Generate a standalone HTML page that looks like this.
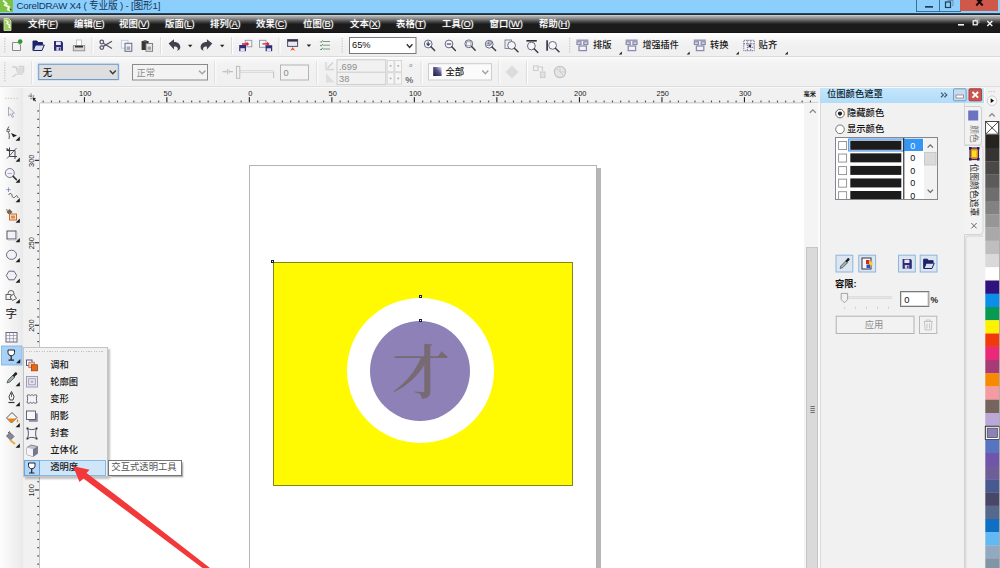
<!DOCTYPE html><html lang="zh-CN"><head><meta charset="utf-8"><title>CorelDRAW X4</title><style>
html,body{margin:0;padding:0;}
body{width:1000px;height:568px;overflow:hidden;position:relative;background:#fff;
 font-family:"Liberation Sans","Noto Sans CJK SC",sans-serif;font-size:10px;color:#000;}
.a{position:absolute;}
.t{position:absolute;white-space:nowrap;line-height:1;}
</style></head><body>
<div class="a" style="left:0px;top:0px;width:1000px;height:13px;background:linear-gradient(#8ccffd,#8ccffd 60%,#89d0fb);"></div>
<div class="a" style="left:0px;top:12.7px;width:1000px;height:2.2px;background:linear-gradient(#4a7090,#1c2c40 40%,#1c2c40);"></div>
<div class="t" style="left:16.5px;top:1.2px;font-size:9.7px;color:#10355a;letter-spacing:-0.2px;">CorelDRAW X4 ( 专业版 ) - [图形1]</div>
<div class="a" style="left:0px;top:0px;width:12.5px;height:11.5px;background:#7cc242;"></div>
<div class="a" style="left:916px;top:0px;width:23.5px;height:11.5px;border:1px solid #3d6f96;border-top:none;box-sizing:border-box;"></div>
<div class="a" style="left:939.5px;top:0px;width:21px;height:11.5px;border-bottom:1px solid #3d6f96;box-sizing:border-box;"></div>
<div class="a" style="left:960px;top:0px;width:37.5px;height:11.3px;background:#d0584a;"></div>
<svg class="a" style="left:900px;top:0" width="100" height="33" viewBox="900 0 100 33"><rect x="925" y="6" width="8" height="1.700" fill="#1c3c5a"/><path d="M948 1.500v-1h5v5h-1" fill="none" stroke="#6a8aa8" stroke-width="0.900"/><rect x="945.500" y="2" width="5" height="5.500" fill="none" stroke="#1c3c5a" stroke-width="1.200"/><path d="M976.300 -1.500l6.400 7M982.700 -1.500l-6.400 7" stroke="#160a08" stroke-width="2"/></svg>
<div class="a" style="left:0px;top:14.8px;width:1000px;height:18.4px;background:linear-gradient(#e0e0e0 0,#b8b8b8 1px,#8a8a8a 3.500px,#4a4a4a 6.500px,#1b1b1b 9.200px,#1b1b1b 17px,#0a0a0a 18.400px);"></div>
<div class="t" style="left:28px;top:18.8px;font-size:9.4px;color:#fff;font-weight:500;text-shadow:0 0 1.5px rgba(255,255,255,0.5);">文件<span style="letter-spacing:-0.3px">(<u>F</u>)</span></div>
<div class="t" style="left:74px;top:18.8px;font-size:9.4px;color:#fff;font-weight:500;text-shadow:0 0 1.5px rgba(255,255,255,0.5);">编辑<span style="letter-spacing:-0.3px">(<u>E</u>)</span></div>
<div class="t" style="left:119px;top:18.8px;font-size:9.4px;color:#fff;font-weight:500;text-shadow:0 0 1.5px rgba(255,255,255,0.5);">视图<span style="letter-spacing:-0.3px">(<u>V</u>)</span></div>
<div class="t" style="left:165px;top:18.8px;font-size:9.4px;color:#fff;font-weight:500;text-shadow:0 0 1.5px rgba(255,255,255,0.5);">版面<span style="letter-spacing:-0.3px">(<u>L</u>)</span></div>
<div class="t" style="left:210px;top:18.8px;font-size:9.4px;color:#fff;font-weight:500;text-shadow:0 0 1.5px rgba(255,255,255,0.5);">排列<span style="letter-spacing:-0.3px">(<u>A</u>)</span></div>
<div class="t" style="left:256px;top:18.8px;font-size:9.4px;color:#fff;font-weight:500;text-shadow:0 0 1.5px rgba(255,255,255,0.5);">效果<span style="letter-spacing:-0.3px">(<u>C</u>)</span></div>
<div class="t" style="left:303px;top:18.8px;font-size:9.4px;color:#fff;font-weight:500;text-shadow:0 0 1.5px rgba(255,255,255,0.5);">位图<span style="letter-spacing:-0.3px">(<u>B</u>)</span></div>
<div class="t" style="left:350px;top:18.8px;font-size:9.4px;color:#fff;font-weight:500;text-shadow:0 0 1.5px rgba(255,255,255,0.5);">文本<span style="letter-spacing:-0.3px">(<u>X</u>)</span></div>
<div class="t" style="left:396px;top:18.8px;font-size:9.4px;color:#fff;font-weight:500;text-shadow:0 0 1.5px rgba(255,255,255,0.5);">表格<span style="letter-spacing:-0.3px">(<u>T</u>)</span></div>
<div class="t" style="left:442px;top:18.8px;font-size:9.4px;color:#fff;font-weight:500;text-shadow:0 0 1.5px rgba(255,255,255,0.5);">工具<span style="letter-spacing:-0.3px">(<u>O</u>)</span></div>
<div class="t" style="left:489.5px;top:18.8px;font-size:9.4px;color:#fff;font-weight:500;text-shadow:0 0 1.5px rgba(255,255,255,0.5);">窗口<span style="letter-spacing:-0.3px">(<u>W</u>)</span></div>
<div class="t" style="left:539px;top:18.8px;font-size:9.4px;color:#fff;font-weight:500;text-shadow:0 0 1.5px rgba(255,255,255,0.5);">帮助<span style="letter-spacing:-0.3px">(<u>H</u>)</span></div>
<svg class="a" style="left:0;top:0" width="14" height="33" viewBox="0 0 14 33"><path d="M3 0.500l3.500 3-1.500 1.500 4 2-1 2.500 2.500 1" fill="none" stroke="#f4fae8" stroke-width="2"/><circle cx="10.600" cy="9.600" r="0.900" fill="#2a4a1a"/><path d="M4 18.500h4.500l2.500 2.500v9.500h-7z" fill="#9ccc5c" stroke="#d8ecb8" stroke-width="0.800"/><path d="M5.500 20l2.500 2-1 1.500 2.500 1.500-.5 2 1.500 1" fill="none" stroke="#f4fae8" stroke-width="1.400"/></svg>
<svg class="a" style="left:950px;top:15px" width="50" height="18" viewBox="950 15 50 18"><rect x="958" y="24" width="6" height="1.600" fill="#f0f0f0"/><path d="M975.500 20.500v-1.500h3.500v4h-1" fill="none" stroke="#bbb" stroke-width="0.800"/><rect x="973.200" y="20.800" width="4" height="4" fill="none" stroke="#f0f0f0" stroke-width="1.300"/><path d="M987.300 21l5 5M992.300 21l-5 5" stroke="#f0f0f0" stroke-width="1.500"/></svg>
<div class="a" style="left:0px;top:33px;width:1000px;height:24px;background:linear-gradient(#fff 0,#fbfbfb 12%,#f3f3f3 35%,#f0f0f0 60%,#f0f0f0);"></div>
<div class="a" style="left:0px;top:56px;width:1000px;height:1px;background:#dadada;"></div>
<div class="a" style="left:0px;top:57px;width:1000px;height:1px;background:#fdfdfd;"></div>
<div class="a" style="left:0px;top:58px;width:1000px;height:29px;background:linear-gradient(#f8f8f8 0,#f2f2f2 25%,#f0f0f0 100%);"></div>
<div class="a" style="left:0px;top:86px;width:1000px;height:1px;background:#dedede;"></div>
<div class="a" style="left:0px;top:87px;width:1000px;height:1px;background:#f8f8f8;"></div>
<div class="a" style="left:0px;top:88px;width:23.5px;height:480px;background:linear-gradient(90deg,#fdfdfd 0,#f6f6f6 35%,#ededed 80%,#e9e9e9 96%,#f8f8f8 100%);"></div>
<div class="a" style="left:23.5px;top:88px;width:796.5px;height:15.5px;background:#f1f1f1;"></div>
<div class="a" style="left:23.5px;top:103px;width:16.5px;height:465px;background:#f1f1f1;"></div>
<div class="a" style="left:40px;top:103px;width:766px;height:465px;background:#fff;"></div>
<div class="a" style="left:249px;top:164.5px;width:347.5px;height:410px;border:1px solid #b4b4b4;box-sizing:border-box;background:#fff;"></div>
<div class="a" style="left:596.5px;top:168px;width:4.5px;height:400px;background:#b6b6b6;"></div>
<div class="a" style="left:273px;top:261.7px;width:300px;height:224.2px;background:#fffa02;border:1px solid #84841c;box-sizing:border-box;"></div>
<div class="a" style="left:346.5px;top:298px;width:147px;height:145px;background:#fff;border-radius:50%;"></div>
<div class="a" style="left:370px;top:321px;width:100px;height:100px;background:#8d81b8;border-radius:50%;"></div>
<div class="t" style="left:392px;top:345px;font-size:58px;color:#786a72;font-weight:600;font-family:'Liberation Serif','Noto Serif CJK SC',serif;">才</div>
<svg class="a" style="left:0;top:88px" width="820" height="16" viewBox="0 88 820 16"><rect x="42.6" y="100.6" width="1.1" height="1.9" fill="#444"/><rect x="50.9" y="100.6" width="1.1" height="1.9" fill="#444"/><rect x="59.1" y="100.6" width="1.1" height="1.9" fill="#444"/><rect x="67.4" y="100.6" width="1.1" height="1.9" fill="#444"/><rect x="75.6" y="100.6" width="1.1" height="1.9" fill="#444"/><rect x="83.9" y="97.2" width="1.1" height="5.3" fill="#222"/><text x="85.2" y="95.7" font-size="7.4" text-anchor="middle" fill="#222" font-family="Liberation Sans, sans-serif">100</text><rect x="92.1" y="100.6" width="1.1" height="1.9" fill="#444"/><rect x="100.4" y="100.6" width="1.1" height="1.9" fill="#444"/><rect x="108.6" y="100.6" width="1.1" height="1.9" fill="#444"/><rect x="116.9" y="100.6" width="1.1" height="1.9" fill="#444"/><rect x="125.1" y="100.6" width="1.1" height="1.9" fill="#444"/><rect x="133.3" y="100.6" width="1.1" height="1.9" fill="#444"/><rect x="141.6" y="100.6" width="1.1" height="1.9" fill="#444"/><rect x="149.8" y="100.6" width="1.1" height="1.9" fill="#444"/><rect x="158.1" y="100.6" width="1.1" height="1.9" fill="#444"/><rect x="166.3" y="97.2" width="1.1" height="5.3" fill="#222"/><text x="167.7" y="95.7" font-size="7.4" text-anchor="middle" fill="#222" font-family="Liberation Sans, sans-serif">50</text><rect x="174.6" y="100.6" width="1.1" height="1.9" fill="#444"/><rect x="182.8" y="100.6" width="1.1" height="1.9" fill="#444"/><rect x="191.1" y="100.6" width="1.1" height="1.9" fill="#444"/><rect x="199.3" y="100.6" width="1.1" height="1.9" fill="#444"/><rect x="207.6" y="100.6" width="1.1" height="1.9" fill="#444"/><rect x="215.8" y="100.6" width="1.1" height="1.9" fill="#444"/><rect x="224.1" y="100.6" width="1.1" height="1.9" fill="#444"/><rect x="232.3" y="100.6" width="1.1" height="1.9" fill="#444"/><rect x="240.6" y="100.6" width="1.1" height="1.9" fill="#444"/><rect x="248.8" y="97.2" width="1.1" height="5.3" fill="#222"/><text x="250.2" y="95.7" font-size="7.4" text-anchor="middle" fill="#222" font-family="Liberation Sans, sans-serif">0</text><rect x="257.1" y="100.6" width="1.1" height="1.9" fill="#444"/><rect x="265.3" y="100.6" width="1.1" height="1.9" fill="#444"/><rect x="273.6" y="100.6" width="1.1" height="1.9" fill="#444"/><rect x="281.8" y="100.6" width="1.1" height="1.9" fill="#444"/><rect x="290.1" y="100.6" width="1.1" height="1.9" fill="#444"/><rect x="298.3" y="100.6" width="1.1" height="1.9" fill="#444"/><rect x="306.6" y="100.6" width="1.1" height="1.9" fill="#444"/><rect x="314.8" y="100.6" width="1.1" height="1.9" fill="#444"/><rect x="323.1" y="100.6" width="1.1" height="1.9" fill="#444"/><rect x="331.3" y="97.2" width="1.1" height="5.3" fill="#222"/><text x="332.7" y="95.7" font-size="7.4" text-anchor="middle" fill="#222" font-family="Liberation Sans, sans-serif">50</text><rect x="339.6" y="100.6" width="1.1" height="1.9" fill="#444"/><rect x="347.8" y="100.6" width="1.1" height="1.9" fill="#444"/><rect x="356.1" y="100.6" width="1.1" height="1.9" fill="#444"/><rect x="364.3" y="100.6" width="1.1" height="1.9" fill="#444"/><rect x="372.6" y="100.6" width="1.1" height="1.9" fill="#444"/><rect x="380.8" y="100.6" width="1.1" height="1.9" fill="#444"/><rect x="389.1" y="100.6" width="1.1" height="1.9" fill="#444"/><rect x="397.3" y="100.6" width="1.1" height="1.9" fill="#444"/><rect x="405.6" y="100.6" width="1.1" height="1.9" fill="#444"/><rect x="413.8" y="97.2" width="1.1" height="5.3" fill="#222"/><text x="415.2" y="95.7" font-size="7.4" text-anchor="middle" fill="#222" font-family="Liberation Sans, sans-serif">100</text><rect x="422.1" y="100.6" width="1.1" height="1.9" fill="#444"/><rect x="430.3" y="100.6" width="1.1" height="1.9" fill="#444"/><rect x="438.6" y="100.6" width="1.1" height="1.9" fill="#444"/><rect x="446.8" y="100.6" width="1.1" height="1.9" fill="#444"/><rect x="455.1" y="100.6" width="1.1" height="1.9" fill="#444"/><rect x="463.3" y="100.6" width="1.1" height="1.9" fill="#444"/><rect x="471.6" y="100.6" width="1.1" height="1.9" fill="#444"/><rect x="479.8" y="100.6" width="1.1" height="1.9" fill="#444"/><rect x="488.1" y="100.6" width="1.1" height="1.9" fill="#444"/><rect x="496.3" y="97.2" width="1.1" height="5.3" fill="#222"/><text x="497.7" y="95.7" font-size="7.4" text-anchor="middle" fill="#222" font-family="Liberation Sans, sans-serif">150</text><rect x="504.6" y="100.6" width="1.1" height="1.9" fill="#444"/><rect x="512.9" y="100.6" width="1.1" height="1.9" fill="#444"/><rect x="521.1" y="100.6" width="1.1" height="1.9" fill="#444"/><rect x="529.4" y="100.6" width="1.1" height="1.9" fill="#444"/><rect x="537.6" y="100.6" width="1.1" height="1.9" fill="#444"/><rect x="545.9" y="100.6" width="1.1" height="1.9" fill="#444"/><rect x="554.1" y="100.6" width="1.1" height="1.9" fill="#444"/><rect x="562.4" y="100.6" width="1.1" height="1.9" fill="#444"/><rect x="570.6" y="100.6" width="1.1" height="1.9" fill="#444"/><rect x="578.9" y="97.2" width="1.1" height="5.3" fill="#222"/><text x="580.2" y="95.7" font-size="7.4" text-anchor="middle" fill="#222" font-family="Liberation Sans, sans-serif">200</text><rect x="587.1" y="100.6" width="1.1" height="1.9" fill="#444"/><rect x="595.4" y="100.6" width="1.1" height="1.9" fill="#444"/><rect x="603.6" y="100.6" width="1.1" height="1.9" fill="#444"/><rect x="611.9" y="100.6" width="1.1" height="1.9" fill="#444"/><rect x="620.1" y="100.6" width="1.1" height="1.9" fill="#444"/><rect x="628.4" y="100.6" width="1.1" height="1.9" fill="#444"/><rect x="636.6" y="100.6" width="1.1" height="1.9" fill="#444"/><rect x="644.9" y="100.6" width="1.1" height="1.9" fill="#444"/><rect x="653.1" y="100.6" width="1.1" height="1.9" fill="#444"/><rect x="661.4" y="97.2" width="1.1" height="5.3" fill="#222"/><text x="662.7" y="95.7" font-size="7.4" text-anchor="middle" fill="#222" font-family="Liberation Sans, sans-serif">250</text><rect x="669.6" y="100.6" width="1.1" height="1.9" fill="#444"/><rect x="677.9" y="100.6" width="1.1" height="1.9" fill="#444"/><rect x="686.1" y="100.6" width="1.1" height="1.9" fill="#444"/><rect x="694.4" y="100.6" width="1.1" height="1.9" fill="#444"/><rect x="702.6" y="100.6" width="1.1" height="1.9" fill="#444"/><rect x="710.9" y="100.6" width="1.1" height="1.9" fill="#444"/><rect x="719.1" y="100.6" width="1.1" height="1.9" fill="#444"/><rect x="727.4" y="100.6" width="1.1" height="1.9" fill="#444"/><rect x="735.6" y="100.6" width="1.1" height="1.9" fill="#444"/><rect x="743.9" y="97.2" width="1.1" height="5.3" fill="#222"/><text x="745.2" y="95.7" font-size="7.4" text-anchor="middle" fill="#222" font-family="Liberation Sans, sans-serif">300</text><rect x="752.1" y="100.6" width="1.1" height="1.9" fill="#444"/><rect x="760.4" y="100.6" width="1.1" height="1.9" fill="#444"/><rect x="768.6" y="100.6" width="1.1" height="1.9" fill="#444"/><rect x="776.9" y="100.6" width="1.1" height="1.9" fill="#444"/><rect x="785.1" y="100.6" width="1.1" height="1.9" fill="#444"/><rect x="793.4" y="100.6" width="1.1" height="1.9" fill="#444"/><rect x="801.6" y="100.6" width="1.1" height="1.9" fill="#444"/><rect x="809.9" y="100.6" width="1.1" height="1.9" fill="#444"/><rect x="40" y="102.5" width="778" height="0.8" fill="#b8b8b8"/></svg>
<div class="t" style="left:803.6px;top:91px;font-size:6.2px;color:#111;font-weight:bold;">毫米</div>
<svg class="a" style="left:24px;top:103px" width="16" height="465" viewBox="24 103 16 465"><rect x="37.3" y="110.4" width="1.9" height="1.1" fill="#444"/><rect x="37.3" y="118.7" width="1.9" height="1.1" fill="#444"/><rect x="37.3" y="126.9" width="1.9" height="1.1" fill="#444"/><rect x="37.3" y="135.1" width="1.9" height="1.1" fill="#444"/><rect x="37.3" y="143.4" width="1.9" height="1.1" fill="#444"/><rect x="37.3" y="151.6" width="1.9" height="1.1" fill="#444"/><rect x="34.8" y="159.8" width="4.4" height="1.1" fill="#222"/><text transform="translate(34.3,160.8) rotate(-90)" font-size="7.4" text-anchor="middle" fill="#222" font-family="Liberation Sans, sans-serif">300</text><rect x="37.3" y="168.1" width="1.9" height="1.1" fill="#444"/><rect x="37.3" y="176.3" width="1.9" height="1.1" fill="#444"/><rect x="37.3" y="184.6" width="1.9" height="1.1" fill="#444"/><rect x="37.3" y="192.8" width="1.9" height="1.1" fill="#444"/><rect x="37.3" y="201.1" width="1.9" height="1.1" fill="#444"/><rect x="37.3" y="209.3" width="1.9" height="1.1" fill="#444"/><rect x="37.3" y="217.5" width="1.9" height="1.1" fill="#444"/><rect x="37.3" y="225.8" width="1.9" height="1.1" fill="#444"/><rect x="37.3" y="234.0" width="1.9" height="1.1" fill="#444"/><rect x="34.8" y="242.2" width="4.4" height="1.1" fill="#222"/><text transform="translate(34.3,243.2) rotate(-90)" font-size="7.4" text-anchor="middle" fill="#222" font-family="Liberation Sans, sans-serif">250</text><rect x="37.3" y="250.5" width="1.9" height="1.1" fill="#444"/><rect x="37.3" y="258.7" width="1.9" height="1.1" fill="#444"/><rect x="37.3" y="267.0" width="1.9" height="1.1" fill="#444"/><rect x="37.3" y="275.2" width="1.9" height="1.1" fill="#444"/><rect x="37.3" y="283.4" width="1.9" height="1.1" fill="#444"/><rect x="37.3" y="291.7" width="1.9" height="1.1" fill="#444"/><rect x="37.3" y="299.9" width="1.9" height="1.1" fill="#444"/><rect x="37.3" y="308.2" width="1.9" height="1.1" fill="#444"/><rect x="37.3" y="316.4" width="1.9" height="1.1" fill="#444"/><rect x="34.8" y="324.7" width="4.4" height="1.1" fill="#222"/><text transform="translate(34.3,325.6) rotate(-90)" font-size="7.4" text-anchor="middle" fill="#222" font-family="Liberation Sans, sans-serif">200</text><rect x="37.3" y="332.9" width="1.9" height="1.1" fill="#444"/><rect x="37.3" y="341.1" width="1.9" height="1.1" fill="#444"/><rect x="37.3" y="349.4" width="1.9" height="1.1" fill="#444"/><rect x="37.3" y="357.6" width="1.9" height="1.1" fill="#444"/><rect x="37.3" y="365.8" width="1.9" height="1.1" fill="#444"/><rect x="37.3" y="374.1" width="1.9" height="1.1" fill="#444"/><rect x="37.3" y="382.3" width="1.9" height="1.1" fill="#444"/><rect x="37.3" y="390.6" width="1.9" height="1.1" fill="#444"/><rect x="37.3" y="398.8" width="1.9" height="1.1" fill="#444"/><rect x="34.8" y="407.1" width="4.4" height="1.1" fill="#222"/><text transform="translate(34.3,408.0) rotate(-90)" font-size="7.4" text-anchor="middle" fill="#222" font-family="Liberation Sans, sans-serif">150</text><rect x="37.3" y="415.3" width="1.9" height="1.1" fill="#444"/><rect x="37.3" y="423.5" width="1.9" height="1.1" fill="#444"/><rect x="37.3" y="431.8" width="1.9" height="1.1" fill="#444"/><rect x="37.3" y="440.0" width="1.9" height="1.1" fill="#444"/><rect x="37.3" y="448.3" width="1.9" height="1.1" fill="#444"/><rect x="37.3" y="456.5" width="1.9" height="1.1" fill="#444"/><rect x="37.3" y="464.7" width="1.9" height="1.1" fill="#444"/><rect x="37.3" y="473.0" width="1.9" height="1.1" fill="#444"/><rect x="37.3" y="481.2" width="1.9" height="1.1" fill="#444"/><rect x="34.8" y="489.4" width="4.4" height="1.1" fill="#222"/><text transform="translate(34.3,490.4) rotate(-90)" font-size="7.4" text-anchor="middle" fill="#222" font-family="Liberation Sans, sans-serif">100</text><rect x="37.3" y="497.7" width="1.9" height="1.1" fill="#444"/><rect x="37.3" y="505.9" width="1.9" height="1.1" fill="#444"/><rect x="37.3" y="514.2" width="1.9" height="1.1" fill="#444"/><rect x="37.3" y="522.4" width="1.9" height="1.1" fill="#444"/><rect x="37.3" y="530.7" width="1.9" height="1.1" fill="#444"/><rect x="37.3" y="538.9" width="1.9" height="1.1" fill="#444"/><rect x="37.3" y="547.1" width="1.9" height="1.1" fill="#444"/><rect x="37.3" y="555.4" width="1.9" height="1.1" fill="#444"/><rect x="37.3" y="563.6" width="1.9" height="1.1" fill="#444"/><rect x="39.2" y="103" width="0.8" height="465" fill="#b8b8b8"/></svg>
<svg class="a" style="left:0;top:33px" width="1000" height="55" viewBox="0 33 1000 55"><rect x="4.2" y="38" width="1.2" height="1.2" fill="#c4c4c4"/><rect x="4.2" y="40.6" width="1.2" height="1.2" fill="#c4c4c4"/><rect x="4.2" y="43.2" width="1.2" height="1.2" fill="#c4c4c4"/><rect x="4.2" y="45.800000000000004" width="1.2" height="1.2" fill="#c4c4c4"/><rect x="4.2" y="48.400000000000006" width="1.2" height="1.2" fill="#c4c4c4"/><rect x="4.2" y="51.00000000000001" width="1.2" height="1.2" fill="#c4c4c4"/><path d="M12.5 42.5h5.5l2.5 2.5v5.5h-8z" fill="#f4f4f4" stroke="#8a8a8a" stroke-width="1"/><circle cx="20.2" cy="41.6" r="2.3" fill="#2e9a2e"/><path d="M33 50.5v-9.5h4l1 1.5h4.5v2" fill="#1c2266" stroke="#1c2266" stroke-width="1"/><path d="M33.3 50.5l2.2-5.5h8.8l-2.3 5.5z" fill="#dcdcf0" stroke="#1c2266" stroke-width="1"/><path d="M54 41h7.5l1.5 1.5v8.2h-9z" fill="#2c2c74"/><rect x="56" y="41.6" width="4.8" height="3.4" fill="#e8e8f8"/><rect x="56.3" y="47" width="4.4" height="3.7" fill="#d0d0e8"/><rect x="58.8" y="47.6" width="1.3" height="2.6" fill="#2c2c74"/><rect x="76.5" y="40" width="5" height="6.5" fill="#fff" stroke="#b8b8b8" stroke-width="0.8"/><rect x="73.3" y="45.6" width="11.4" height="5.2" fill="#d8d8d8" stroke="#8a8a8a" stroke-width="0.9"/><rect x="75" y="45.8" width="8" height="1.7" fill="#333"/><rect x="91.5" y="37" width="1" height="17" fill="#dadada"/><rect x="92.5" y="37" width="1" height="17" fill="#fff"/><g fill="none" stroke="#55556c" stroke-width="1.25"><circle cx="101.8" cy="42" r="1.8"/><circle cx="101.8" cy="47.6" r="1.8"/><path d="M103.3 43.2L112 48.5M103.3 46.4L112 41.2"/></g><rect x="121.3" y="40.3" width="6.6" height="7.8" fill="#f6f8fc" stroke="#b8c8dc" stroke-width="0.8"/><rect x="125" y="43.3" width="6.8" height="8" fill="#eef0f6" stroke="#666a80" stroke-width="1"/><rect x="126.6" y="46.5" width="3.6" height="3.4" fill="#a8a8b8"/><rect x="141.6" y="41" width="7" height="9" fill="#3a3630"/><rect x="143.6" y="40" width="3" height="1.6" fill="#777"/><rect x="146" y="43.5" width="6.6" height="7.8" fill="#e6e6ea" stroke="#777" stroke-width="0.9"/><rect x="147.6" y="46.6" width="3.4" height="3.2" fill="#a4a4ac"/><rect x="160.2" y="37" width="1" height="17" fill="#dadada"/><rect x="161.2" y="37" width="1" height="17" fill="#fff"/><path d="M168.6 43.6l5.4-4.4v2.9c3.6-.2 6.3 2 6.3 5 0 2-1.2 3.4-3.4 3.9 1-1 1.200-2.100.6-3.200-.6-1.1-1.800-1.500-3.500-1.400v3z" fill="#40404f"/><path d="M188.0 44.8h4.4l-2.2 2.5z" fill="#222"/><path d="M212.300 43.600l-5.400-4.400v2.900c-3.600-.2-6.300 2-6.300 5 0 2 1.200 3.400 3.400 3.900-1-1-1.200-2.100-.6-3.200.6-1.100 1.800-1.500 3.500-1.400v3z" fill="#40404f"/><path d="M220.0 44.8h4.4l-2.2 2.5z" fill="#222"/><rect x="231.1" y="37" width="1" height="17" fill="#dadada"/><rect x="232.1" y="37" width="1" height="17" fill="#fff"/><rect x="245.300" y="40.300" width="6.500" height="6.500" fill="#f4f4f4" stroke="#8c96a6" stroke-width="0.9"/><rect x="239.200" y="45" width="6.800" height="6.200" fill="#2c3078"/><rect x="240.400" y="48.200" width="4.400" height="3" fill="#e0e0f0"/><path d="M242 43.300h4.600v-1.500l2.600 2.200-2.600 2.200v-1.500h-4.600z" fill="#d81820"/><rect x="259.500" y="40.300" width="6.500" height="7" fill="#f4f4f4" stroke="#8c96a6" stroke-width="0.900"/><rect x="265.600" y="45.200" width="6.600" height="6" fill="#2c3078"/><rect x="266.800" y="48.300" width="4.200" height="2.900" fill="#e0e0f0"/><path d="M262.500 43.200h4.600v-1.500l2.600 2.200-2.600 2.200v-1.500h-4.600z" fill="#d81820"/><rect x="278.5" y="37" width="1" height="17" fill="#dadada"/><rect x="279.5" y="37" width="1" height="17" fill="#fff"/><rect x="287.600" y="39.600" width="10" height="6.800" fill="#e8e8f0" stroke="#50506a" stroke-width="1"/><rect x="287.600" y="39.600" width="10" height="2" fill="#30304a"/><path d="M290.300 50.800l2.400-3.800 2.400 3.800-2.400-1z" fill="#f0501a"/><path d="M306.7 44.6h4.4l-2.2 2.5z" fill="#222"/><g stroke="#7a9a80" stroke-width="1" fill="none"><path d="M323 41.500h7M323 45.200h7M323 49h7"/><path d="M320.200 41.500l1 1 1.500-2.200M320.200 45.200l1 1 1.500-2.200M320.200 49l1 1 1.500-2.200" stroke="#5a8a60"/></g><rect x="341.6" y="38" width="1.2" height="1.2" fill="#c4c4c4"/><rect x="341.6" y="40.6" width="1.2" height="1.2" fill="#c4c4c4"/><rect x="341.6" y="43.2" width="1.2" height="1.2" fill="#c4c4c4"/><rect x="341.6" y="45.800000000000004" width="1.2" height="1.2" fill="#c4c4c4"/><rect x="341.6" y="48.400000000000006" width="1.2" height="1.2" fill="#c4c4c4"/><rect x="341.6" y="51.00000000000001" width="1.2" height="1.2" fill="#c4c4c4"/><rect x="349.500" y="37.500" width="66.500" height="16" fill="#fff" stroke="#7a7a7a" stroke-width="1"/><text x="352" y="48.400" font-size="9.300" fill="#111" font-family="Liberation Sans, sans-serif">65%</text><path d="M406.8 44.199999999999996l2.8 3.2l2.8 -3.2" fill="none" stroke="#333" stroke-width="1.4"/><circle cx="428.2" cy="44" r="3.900" fill="#f4f6fa" stroke="#6a6a7c" stroke-width="1"/><path d="M425.800 43.400h4.800l-2.400 2.800z" fill="#34346a"/><rect x="427.600" y="41.600" width="1.200" height="2" fill="#34346a"/><path d="M431.0 46.8l3.600 3.600" stroke="#3c3c44" stroke-width="1.450" stroke-linecap="round"/><circle cx="449" cy="44" r="3.900" fill="#f4f6fa" stroke="#6a6a7c" stroke-width="1"/><rect x="446.800" y="43.400" width="4.400" height="1.300" fill="#55557a"/><path d="M451.8 46.8l3.600 3.600" stroke="#3c3c44" stroke-width="1.450" stroke-linecap="round"/><circle cx="468.8" cy="43.8" r="3.900" fill="#f4f6fa" stroke="#6a6a7c" stroke-width="1"/><rect x="466.600" y="41.800" width="4.400" height="4" fill="none" stroke="#8a8aa8" stroke-width="0.800"/><path d="M471.6 46.599999999999994l3.600 3.600" stroke="#3c3c44" stroke-width="1.450" stroke-linecap="round"/><circle cx="489.2" cy="44.2" r="3.900" fill="#f4f6fa" stroke="#6a6a7c" stroke-width="1"/><rect x="487" y="43" width="3" height="2.600" fill="none" stroke="#77779a" stroke-width="0.800"/><rect x="488.600" y="41.800" width="2.800" height="2.400" fill="none" stroke="#77779a" stroke-width="0.800"/><path d="M492.0 47.0l3.600 3.600" stroke="#3c3c44" stroke-width="1.450" stroke-linecap="round"/><rect x="505" y="40" width="6.500" height="8.500" fill="#eceef6" stroke="#7a7a92" stroke-width="0.900"/><circle cx="511.6" cy="45.4" r="3.900" fill="#f4f6fa" stroke="#6a6a7c" stroke-width="1"/><path d="M514.4 48.199999999999996l3.600 3.600" stroke="#3c3c44" stroke-width="1.450" stroke-linecap="round"/><rect x="526.400" y="40" width="10.400" height="1.600" fill="#2c2c3c"/><circle cx="531.4" cy="46" r="3.900" fill="#f4f6fa" stroke="#6a6a7c" stroke-width="1"/><path d="M534.1999999999999 48.8l3.600 3.600" stroke="#3c3c44" stroke-width="1.450" stroke-linecap="round"/><rect x="546.300" y="40.300" width="1.600" height="10.400" fill="#2c2c3c"/><circle cx="552.6" cy="45.4" r="3.900" fill="#f4f6fa" stroke="#6a6a7c" stroke-width="1"/><path d="M555.4 48.199999999999996l3.600 3.600" stroke="#3c3c44" stroke-width="1.450" stroke-linecap="round"/><rect x="569" y="38" width="1.2" height="1.2" fill="#c4c4c4"/><rect x="569" y="40.6" width="1.2" height="1.2" fill="#c4c4c4"/><rect x="569" y="43.2" width="1.2" height="1.2" fill="#c4c4c4"/><rect x="569" y="45.800000000000004" width="1.2" height="1.2" fill="#c4c4c4"/><rect x="569" y="48.400000000000006" width="1.2" height="1.2" fill="#c4c4c4"/><rect x="569" y="51.00000000000001" width="1.2" height="1.2" fill="#c4c4c4"/><g fill="none" stroke="#8c8cac" stroke-width="1.300"><path d="M576.4 40.200h12"/><rect x="577.0" y="41.800" width="4" height="2.600" fill="#e8e8f4"/><rect x="583.8" y="41.800" width="4" height="2.600" fill="#e8e8f4"/><rect x="579.0" y="46" width="7.400" height="4.600" fill="#f4f4fa"/></g><path d="M618.9 54.6h3v-3z" fill="#222"/><g fill="none" stroke="#8c8cac" stroke-width="1.300"><path d="M625.6 40.200h12"/><rect x="626.2" y="41.800" width="4" height="2.600" fill="#e8e8f4"/><rect x="633.0" y="41.800" width="4" height="2.600" fill="#e8e8f4"/><rect x="628.2" y="46" width="7.400" height="4.600" fill="#f4f4fa"/></g><path d="M686.7 54.6h3v-3z" fill="#222"/><g fill="none" stroke="#8c8cac" stroke-width="1.300"><path d="M693.8 40.200h12"/><rect x="694.4" y="41.800" width="4" height="2.600" fill="#e8e8f4"/><rect x="701.1999999999999" y="41.800" width="4" height="2.600" fill="#e8e8f4"/><rect x="696.4" y="46" width="7.400" height="4.600" fill="#f4f4fa"/></g><path d="M735.9 54.6h3v-3z" fill="#222"/><g fill="none" stroke="#6c6c8c" stroke-width="1" stroke-dasharray="1.300 0.900"><rect x="743.800" y="40.300" width="10.400" height="10.400" fill="#f6f6fa"/><path d="M747.300 40.300v10.400M750.800 40.300v10.400M743.800 43.800h10.400M747.300 47.300h7"/></g><rect x="748.600" y="44.600" width="2.400" height="2.400" fill="#33334a"/><path d="M784.9 54.6h3v-3z" fill="#222"/><rect x="4.2" y="62" width="1.2" height="1.2" fill="#c4c4c4"/><rect x="4.2" y="64.6" width="1.2" height="1.2" fill="#c4c4c4"/><rect x="4.2" y="67.19999999999999" width="1.2" height="1.2" fill="#c4c4c4"/><rect x="4.2" y="69.79999999999998" width="1.2" height="1.2" fill="#c4c4c4"/><rect x="4.2" y="72.39999999999998" width="1.2" height="1.2" fill="#c4c4c4"/><rect x="4.2" y="74.99999999999997" width="1.2" height="1.2" fill="#c4c4c4"/><rect x="4.2" y="77.59999999999997" width="1.2" height="1.2" fill="#c4c4c4"/><rect x="4.2" y="80.19999999999996" width="1.2" height="1.2" fill="#c4c4c4"/><path d="M12 67h4l1.500 5h6v-5.500h-5" fill="none" stroke="#d2d2d2" stroke-width="1.600"/><rect x="17" y="67.500" width="6" height="7.500" fill="#dcdcdc"/><path d="M12.500 77l4-3" stroke="#d0d0d0" stroke-width="1.500"/><rect x="31.3" y="61" width="1" height="23" fill="#dadada"/><rect x="32.3" y="61" width="1" height="23" fill="#fff"/><rect x="37.700" y="63.300" width="81.600" height="17.200" rx="1" fill="none" stroke="#cfe3f6" stroke-width="1"/><rect x="38.700" y="64.300" width="79.600" height="15.200" fill="#dedede" stroke="#6f9cc8" stroke-width="1"/><path d="M109.8 70.60000000000001l3.0 3.2l3.0 -3.2" fill="none" stroke="#3a3a3a" stroke-width="1.4"/><rect x="132.500" y="64.500" width="75" height="15.500" fill="#f3f3f3" stroke="#8a8a8a" stroke-width="1"/><path d="M199.0 70.60000000000001l3.2 3.2l3.2 -3.2" fill="none" stroke="#a8a8a8" stroke-width="1.5"/><rect x="214.3" y="61" width="1" height="23" fill="#dadada"/><rect x="215.3" y="61" width="1" height="23" fill="#fff"/><g stroke="#c0c0c0" stroke-width="1.100" fill="none"><path d="M222.500 71.600h3M230 71.600h3M227.700 69v5.400"/><path d="M225.500 70l1.600 1.600-1.600 1.600zM230 70l-1.600 1.600 1.600 1.600z" fill="#c0c0c0" stroke="none"/></g><rect x="240" y="70.600" width="33.500" height="2" fill="#ececec" stroke="#d4d4d4" stroke-width="0.700"/><rect x="236.400" y="66.300" width="3.400" height="12" fill="#f0f0f0" stroke="#b8b8b8" stroke-width="0.900"/><rect x="273" y="72" width="1.200" height="6" fill="#c8c8c8"/><rect x="280.500" y="65" width="28" height="15" fill="#f3f3f3" stroke="#b4b4b4" stroke-width="1"/><text x="283.400" y="76" font-size="9.300" fill="#8a8a8a" font-family="Liberation Sans, sans-serif">0</text><rect x="316.3" y="61" width="1" height="23" fill="#dadada"/><rect x="317.3" y="61" width="1" height="23" fill="#fff"/><path d="M326 62v7.500h8" fill="none" stroke="#d4d4d4" stroke-width="1.300"/><path d="M327.500 68l5.500-5.500" stroke="#cfcfcf" stroke-width="1.200"/><path d="M326 73v9.500h8.500z" fill="#dedede"/><rect x="337" y="59.800" width="48.800" height="24.800" fill="#f1f1f1" stroke="#cbcbcb" stroke-width="1"/><path d="M337 72.200h48.800" stroke="#cbcbcb" stroke-width="1"/><text x="339" y="69.600" font-size="9.300" fill="#8c8c8c" font-family="Liberation Sans, sans-serif">.699</text><text x="339" y="82" font-size="9.300" fill="#8c8c8c" font-family="Liberation Sans, sans-serif">38</text><rect x="387.20000000000005" y="60.4" width="6.800" height="11.400" fill="#f6f6f6" stroke="#d0d0d0" stroke-width="0.800"/><path d="M389.1 65.3h3l-1.500 2z" fill="#b0b0b0"/><rect x="394.8" y="60.4" width="6.800" height="11.400" fill="#f6f6f6" stroke="#d0d0d0" stroke-width="0.800"/><path d="M396.7 65.3h3l-1.500 2z" fill="#b0b0b0"/><rect x="387.20000000000005" y="72.80000000000001" width="6.800" height="11.400" fill="#f6f6f6" stroke="#d0d0d0" stroke-width="0.800"/><path d="M389.1 77.7h3l-1.500 2z" fill="#b0b0b0"/><rect x="394.8" y="72.80000000000001" width="6.800" height="11.400" fill="#f6f6f6" stroke="#d0d0d0" stroke-width="0.800"/><path d="M396.7 77.7h3l-1.500 2z" fill="#b0b0b0"/><text x="409.300" y="67.300" font-size="5.500" fill="#777" font-family="Liberation Sans, sans-serif">o</text><text x="405.200" y="83" font-size="9" font-weight="bold" fill="#707070" font-family="Liberation Sans, sans-serif">%</text><rect x="420.7" y="61" width="1" height="23" fill="#dadada"/><rect x="421.7" y="61" width="1" height="23" fill="#fff"/><defs><linearGradient id="gq" x1="0" y1="1" x2="1" y2="0"><stop offset="0" stop-color="#18182c"/><stop offset="0.550" stop-color="#58508c"/><stop offset="1" stop-color="#e8e4f8"/></linearGradient></defs><rect x="428.500" y="63.700" width="63" height="16.300" fill="#fbfbfb" stroke="#cdcdcd" stroke-width="1"/><rect x="433.200" y="67" width="8.400" height="9" fill="url(#gq)"/><path d="M482.3 70.60000000000001l3.0 3.2l3.0 -3.2" fill="none" stroke="#a0a0a0" stroke-width="1.4"/><rect x="498.4" y="61" width="1" height="23" fill="#dadada"/><rect x="499.4" y="61" width="1" height="23" fill="#fff"/><path d="M512 65.500l6.500 6.500-6.500 6.500-6.500-6.500z" fill="#dcdcdc"/><rect x="525.9" y="61" width="1" height="23" fill="#dadada"/><rect x="526.9" y="61" width="1" height="23" fill="#fff"/><g fill="none" stroke="#cfcfcf" stroke-width="1.200"><rect x="533.500" y="66" width="4.500" height="4.500"/><rect x="540.500" y="72" width="4.500" height="5.500" fill="#e2e2e2"/><path d="M538 67h4.500v4"/></g><circle cx="560" cy="72" r="5.600" fill="#e6e6e6" stroke="#c4c4c4" stroke-width="1.200"/><path d="M556 68l8 8M560 66.500v5.500h5" stroke="#cfcfcf" stroke-width="1" fill="none"/></svg>
<div class="t" style="left:593px;top:40.5px;font-size:9.3px;color:#1a1a1a;font-weight:500;">排版</div>
<div class="t" style="left:642.4px;top:40.5px;font-size:9.1px;color:#1a1a1a;font-weight:500;">增强插件</div>
<div class="t" style="left:710px;top:40.5px;font-size:9.3px;color:#1a1a1a;font-weight:500;">转换</div>
<div class="t" style="left:758.6px;top:40.5px;font-size:9.3px;color:#1a1a1a;font-weight:500;">贴齐</div>
<div class="t" style="left:42.8px;top:68.5px;font-size:9.3px;color:#111;font-weight:500;">无</div>
<div class="t" style="left:136.4px;top:68.5px;font-size:9.3px;color:#8e8e8e;">正常</div>
<div class="t" style="left:445.4px;top:67.4px;font-size:9.4px;color:#111;font-weight:500;">全部</div>
<svg class="a" style="left:0;top:90px" width="40" height="370" viewBox="0 90 40 370"><rect x="5.0" y="97.800" width="1.400" height="1.200" fill="#d0d0cc"/><rect x="7.8" y="97.800" width="1.400" height="1.200" fill="#d0d0cc"/><rect x="10.6" y="97.800" width="1.400" height="1.200" fill="#d0d0cc"/><rect x="13.399999999999999" y="97.800" width="1.400" height="1.200" fill="#d0d0cc"/><rect x="16.2" y="97.800" width="1.400" height="1.200" fill="#d0d0cc"/><g stroke="#333" stroke-width="0.9" fill="none" stroke-dasharray="1.2 0.9"><path d="M28.500 96h6.500M31 93.500v6.500"/></g><path d="M32.500 97.200l3.600 1.400-1.400.7 1.400 1.600-.8.700-1.400-1.600-.7 1.300z" fill="#222"/><path d="M8.500 107l6 6.200-2.600.2 1.700 3.400-1.400.6-1.700-3.400-2 1.800z" fill="#f2f2f6" stroke="#a4a4b8" stroke-width="0.900"/><path d="M9 126.500c-2 2-1.500 4.500-.5 6s1 4 .5 6.500" fill="none" stroke="#555" stroke-width="1"/><rect x="7" y="129.500" width="2.200" height="2.200" fill="#fff" stroke="#444" stroke-width="0.700"/><path d="M11 133l6 2.500-3.800 1.800z" fill="#222"/><path d="M15.6 140.8h4.200v-4.200z" fill="#1a1a1a"/><g stroke="#3c3c48" stroke-width="0.950" fill="none"><path d="M9.500 147.500v9h7.500M6.500 150.500h8.500v8.500"/><path d="M7 158.500l9.500-10.500" stroke-width="0.800"/><path d="M6.500 148.500l3.500 3" stroke-width="1.300"/></g><path d="M15.6 161.8h4.200v-4.200z" fill="#1a1a1a"/><circle cx="9.800" cy="173" r="4.500" fill="#f0f2f8" stroke="#777790" stroke-width="1"/><path d="M7.500 173.500h4.500" stroke="#a0a0b8" stroke-width="0.800"/><path d="M13.200 176.400l3.200 3.200" stroke="#333" stroke-width="1.500" stroke-linecap="round"/><path d="M15.6 182.8h4.200v-4.200z" fill="#1a1a1a"/><path d="M8.500 187.500v4.500M6.300 189.700h4.400" stroke="#8090b8" stroke-width="0.900"/><path d="M8.500 195c1.500-2.500 3.500-1.500 3.500.5s2 3 3.500 1 2 0 2.500 1.500" fill="none" stroke="#4a4a5a" stroke-width="0.950"/><path d="M15.6 202.3h4.200v-4.200z" fill="#1a1a1a"/><path d="M6.500 212l3-3 3 3-3 3z" fill="#666" /><rect x="9.500" y="214" width="7" height="6" fill="#f4e4d4" stroke="#c86a28" stroke-width="1"/><rect x="11" y="215.600" width="4" height="3" fill="#e88a48"/><path d="M6 209.500l2 1" stroke="#d87828" stroke-width="1.200"/><path d="M15.6 222.8h4.200v-4.200z" fill="#1a1a1a"/><rect x="7" y="231" width="9" height="8" fill="#f2f2f6" stroke="#55556a" stroke-width="1"/><path d="M8 240h9v-8" fill="none" stroke="#c8c8d0" stroke-width="1"/><path d="M15.6 242.3h4.200v-4.200z" fill="#1a1a1a"/><ellipse cx="11.500" cy="254.800" rx="5" ry="4.600" fill="#f2f2f6" stroke="#6a6a80" stroke-width="1"/><path d="M15.6 262.3h4.200v-4.200z" fill="#1a1a1a"/><path d="M6.300 275.500l2.600-4.300h5.200l2.600 4.300-2.600 4.300h-5.200z" fill="#f2f2f6" stroke="#6a6a80" stroke-width="1"/><path d="M15.6 282.8h4.200v-4.200z" fill="#1a1a1a"/><circle cx="11" cy="293.500" r="3" fill="#f4f4f8" stroke="#555" stroke-width="0.900"/><rect x="6" y="294.500" width="5" height="5" fill="#f4f4f8" stroke="#555" stroke-width="0.900"/><path d="M10 297l3.500-3 3 4.500-4 2z" fill="#f4f4f8" stroke="#555" stroke-width="0.900"/><path d="M15.6 303.3h4.200v-4.200z" fill="#1a1a1a"/><rect x="6" y="332.500" width="11" height="9.500" fill="#fafafc" stroke="#66667c" stroke-width="1"/><path d="M6 335.500h11M6 338.700h11M9.700 332.500v9.500M13.400 332.500v9.500" stroke="#8888a0" stroke-width="0.700"/><rect x="1.500" y="346" width="20.500" height="19" fill="#a9d1f5" stroke="#7ab0e0" stroke-width="0.800"/><path d="M8 350h6.500v2.500c0 2.200-1.500 3.200-3.200 3.200s-3.300-1-3.300-3.200z" fill="#fff" stroke="#223" stroke-width="1"/><path d="M11.200 355.700v4M8.500 360.200h5.500" stroke="#223" stroke-width="1.200"/><path d="M16.1 363.3h4.200v-4.200z" fill="#1a1a1a"/><path d="M7 383l1-3 5-5 2 2-5 5z" fill="#9ab0a8" stroke="#444" stroke-width="0.700"/><path d="M12.500 375.500l2.500-3c1-1 3 .8 2 2l-3 2.500z" fill="#222"/><path d="M15.6 386.3h4.200v-4.200z" fill="#1a1a1a"/><path d="M11.500 391.500l2.500 5-1 3.500h-3l-1-3.500z" fill="#f4f4f4" stroke="#333" stroke-width="0.900"/><path d="M11.500 393v4" stroke="#333" stroke-width="0.700"/><path d="M8.500 402.500h6" stroke="#333" stroke-width="1.200"/><path d="M15.6 406.3h4.200v-4.200z" fill="#1a1a1a"/><path d="M6.500 418l5.500-5.500 5 5-5.500 5.500z" fill="#f4f4f4" stroke="#444" stroke-width="0.900"/><path d="M7.500 418.500h8.500l-4.500 4.500z" fill="#e8820c"/><path d="M17.500 419c.8 1.500 1.200 2.500 0 3.500-1.200-1-.8-2 0-3.500z" fill="#e8820c"/><path d="M15.6 427.3h4.200v-4.200z" fill="#1a1a1a"/><path d="M6.500 436l3.500-3.500 4 4-3.500 3.500z" fill="#889" stroke="#556" stroke-width="0.800"/><path d="M10 440l5 4" stroke="#e8b040" stroke-width="2.200"/><path d="M8 433l2-1.500" stroke="#444" stroke-width="1"/><path d="M15.6 447.8h4.200v-4.200z" fill="#1a1a1a"/></svg>
<div class="t" style="left:5.6px;top:309.2px;font-size:11.5px;color:#3a3a3a;font-weight:500;">字</div>
<div class="a" style="left:22.5px;top:346.5px;width:85px;height:130px;background:#f1f1f1;border:1px solid #c4c4c4;box-sizing:border-box;box-shadow:1.500px 1.500px 2px rgba(0,0,0,0.25);"></div>
<div class="a" style="left:26px;top:351px;width:78px;height:1px;background:repeating-linear-gradient(90deg,#c2c2c2 0,#c2c2c2 1.200px,transparent 1.200px,transparent 2.600px);"></div>
<div class="a" style="left:23.5px;top:460px;width:82.5px;height:16px;background:#cfe5f8;border:1px solid #84b8ea;box-sizing:border-box;"></div>
<div class="a" style="left:23.5px;top:460px;width:16.5px;height:16px;background:#b4d6f4;border:1px solid #6aa4dc;box-sizing:border-box;"></div>
<div class="t" style="left:50.2px;top:360.5px;font-size:9.3px;color:#1a1a1a;font-weight:500;">调和</div>
<div class="t" style="left:50.2px;top:377.63px;font-size:9.3px;color:#1a1a1a;font-weight:500;">轮廓图</div>
<div class="t" style="left:50.2px;top:394.76px;font-size:9.3px;color:#1a1a1a;font-weight:500;">变形</div>
<div class="t" style="left:50.2px;top:411.89px;font-size:9.3px;color:#1a1a1a;font-weight:500;">阴影</div>
<div class="t" style="left:50.2px;top:429.02px;font-size:9.3px;color:#1a1a1a;font-weight:500;">封套</div>
<div class="t" style="left:50.2px;top:446.15px;font-size:9.3px;color:#1a1a1a;font-weight:500;">立体化</div>
<div class="t" style="left:50.2px;top:463.28px;font-size:9.3px;color:#1a1a1a;font-weight:500;">透明度</div>
<svg class="a" style="left:22px;top:355px" width="20" height="122" viewBox="22 355 20 122"><rect x="26.500" y="360" width="5.500" height="5.500" fill="#fff" stroke="#447" stroke-width="0.900"/><rect x="28.800" y="362.200" width="5.500" height="5.500" fill="#f4c8a0" stroke="#a65" stroke-width="0.700"/><rect x="31.500" y="364.800" width="6" height="6" fill="#e86a18" stroke="#a4400c" stroke-width="0.800"/><rect x="26.500" y="376.500" width="11" height="10.500" fill="#e8e8f0" stroke="#9c9cb4" stroke-width="1"/><rect x="28.700" y="378.700" width="6.600" height="6.100" fill="none" stroke="#9c9cb4" stroke-width="0.900"/><rect x="30.700" y="380.600" width="2.600" height="2.300" fill="#b4b4c8"/><path d="M27 395.500c1.500-1 2.500-1 3.500.3 1-1.600 2-1.600 3 0 1-1.300 2.200-1.300 3.500-.3-.8 1.800-.8 4.200 0 7-1.300 1-2.500 1-3.500-.3-1 1.600-2 1.600-3 0-1 1.300-2 1.300-3.500.3.800-2.800.800-5.200 0-7z" fill="#f4f4f8" stroke="#556" stroke-width="0.900"/><rect x="28.800" y="413.300" width="9" height="8.500" fill="#8c8ca8"/><rect x="26.500" y="411" width="9" height="8.500" fill="#f8f8fc" stroke="#556" stroke-width="0.900"/><path d="M27.500 428.500c2.500 1.500 6 1.500 9 0-1.200 3-1.200 6.500 0 10-3-1.500-6.500-1.500-9 0 1.200-3.500 1.200-7 0-10z" fill="#f4f4f8" stroke="#445" stroke-width="0.900"/><g fill="#334"><rect x="26.500" y="427.500" width="1.800" height="1.800"/><rect x="35.700" y="427.500" width="1.800" height="1.800"/><rect x="26.500" y="437.700" width="1.800" height="1.800"/><rect x="35.700" y="437.700" width="1.800" height="1.800"/></g><path d="M27 447.500l4-2.500 6.500 1.500v7l-4.500 3-6-2z" fill="#c0c0d0" stroke="#667" stroke-width="0.700"/><path d="M27 447.500l6 1.800v7.200l-6-2z" fill="#f4f4fa"/><path d="M33 449.300l4.500-2.800v7l-4.500 3z" fill="#777790"/><path d="M28.500 463h6.500v2.500c0 2.200-1.500 3.200-3.200 3.200s-3.300-1-3.300-3.200z" fill="#fff" stroke="#223" stroke-width="1"/><path d="M31.700 468.700v3.800M29 473h5.500" stroke="#223" stroke-width="1.200"/></svg>
<div class="a" style="left:107.8px;top:460px;width:74px;height:16px;background:#fff;border:1px solid #767676;box-sizing:border-box;box-shadow:1.500px 1.500px 1.500px rgba(0,0,0,0.3);"></div>
<div class="t" style="left:111.3px;top:463.2px;font-size:9.35px;color:#555;">交互式透明工具</div>
<svg class="a" style="left:60px;top:455px" width="170" height="113" viewBox="60 455 170 113"><path d="M72.900 466L89.500 469.800L86.500 473L120 498.200L210 568L202.400 568L120 505.900L83.500 478.500L79.500 482Z" fill="#f3383a"/></svg>
<div class="a" style="left:804px;top:103px;width:16px;height:465px;background:#f4f4f4;"></div>
<div class="a" style="left:806px;top:247px;width:12px;height:330px;background:#dadada;border:1px solid #c6c6c6;box-sizing:border-box;"></div>
<div class="a" style="left:818px;top:103px;width:2.3px;height:465px;background:#fafafa;"></div>
<svg class="a" style="left:806px;top:103px" width="14" height="465" viewBox="806 103 14 465"><path d="M809.800 112.800l3-3 3 3" fill="none" stroke="#8a8a8a" stroke-width="1.300"/><g stroke="#555" stroke-width="0.800"><path d="M810.400 406.500h4.400M810.400 408.500h4.400M810.400 410.500h4.400M810.400 412.500h4.400"/></g></svg>
<div class="a" style="left:820px;top:103px;width:145px;height:465px;background:#f1f1f1;border-left:1px solid #d9d9d9;border-right:1px solid #d4d4d4;box-sizing:border-box;"></div>
<div class="a" style="left:820px;top:87.5px;width:164px;height:15px;background:linear-gradient(#c4e6fc,#b1dcf9);"></div>
<div class="t" style="left:827px;top:90.2px;font-size:9.3px;color:#0c1c2c;font-weight:500;">位图颜色遮罩</div>
<svg class="a" style="left:820px;top:87px" width="180" height="481" viewBox="820 87 180 481"><path d="M941 92.600l2.400 2.300-2.400 2.300M944.400 92.600l2.400 2.300-2.400 2.300" fill="none" stroke="#3c5a7a" stroke-width="1.200"/><rect x="953.500" y="88.800" width="12.600" height="12" rx="1" fill="#c5dcee" stroke="#6e9cc2" stroke-width="1"/><rect x="956" y="95" width="7.600" height="3" fill="#fff" stroke="#8a6a78" stroke-width="0.700"/><rect x="969" y="88.800" width="12.600" height="12" rx="1" fill="#cc544e" stroke="#b03c3a" stroke-width="1"/><path d="M972.500 92l5.600 5.600M978.100 92l-5.600 5.600" stroke="#fff" stroke-width="1.900"/><circle cx="840" cy="113.600" r="4.300" fill="#fff" stroke="#555" stroke-width="0.900"/><circle cx="840" cy="113.600" r="2.100" fill="#222"/><circle cx="840" cy="129.300" r="4.300" fill="#fff" stroke="#666" stroke-width="0.900"/><rect x="835.500" y="137.500" width="102" height="62" fill="#fff" stroke="#828790" stroke-width="1"/><clipPath id="lc"><rect x="836" y="138" width="101" height="61"/></clipPath><g clip-path="url(#lc)"><rect x="848.700" y="139.0" width="55" height="12" fill="#cfe4fa" stroke="#3c8ae6" stroke-width="1"/><rect x="904.400" y="138.7" width="18.600" height="12.300" fill="#3395f5"/><rect x="838.600" y="141.5" width="8" height="8" fill="#fff" stroke="#8c8c8c" stroke-width="0.900"/><rect x="850.300" y="140.8" width="51" height="9" fill="#1c1c1c"/><text x="912.800" y="148.6" font-size="9" fill="#fff" text-anchor="middle" font-family="Liberation Sans, sans-serif">0</text><rect x="838.600" y="154.05" width="8" height="8" fill="#fff" stroke="#8c8c8c" stroke-width="0.900"/><rect x="850.300" y="153.35000000000002" width="51" height="9" fill="#1c1c1c"/><text x="912.800" y="161.15" font-size="9" fill="#111" text-anchor="middle" font-family="Liberation Sans, sans-serif">0</text><rect x="838.600" y="166.6" width="8" height="8" fill="#fff" stroke="#8c8c8c" stroke-width="0.900"/><rect x="850.300" y="165.9" width="51" height="9" fill="#1c1c1c"/><text x="912.800" y="173.7" font-size="9" fill="#111" text-anchor="middle" font-family="Liberation Sans, sans-serif">0</text><rect x="838.600" y="179.15" width="8" height="8" fill="#fff" stroke="#8c8c8c" stroke-width="0.900"/><rect x="850.300" y="178.45000000000002" width="51" height="9" fill="#1c1c1c"/><text x="912.800" y="186.25" font-size="9" fill="#111" text-anchor="middle" font-family="Liberation Sans, sans-serif">0</text><rect x="838.600" y="191.7" width="8" height="8" fill="#fff" stroke="#8c8c8c" stroke-width="0.900"/><rect x="850.300" y="191.0" width="51" height="9" fill="#1c1c1c"/><text x="912.800" y="198.79999999999998" font-size="9" fill="#111" text-anchor="middle" font-family="Liberation Sans, sans-serif">0</text><rect x="903.300" y="138" width="1" height="61" fill="#111"/></g><rect x="924" y="138" width="13" height="61" fill="#f2f2f2"/><rect x="924.500" y="152.500" width="11.500" height="12.500" fill="#dadada" stroke="#c4c4c4" stroke-width="0.800"/><path d="M927.600 147.600l2.700-2.700 2.700 2.700" fill="none" stroke="#666" stroke-width="1.200"/><path d="M927.600 189.600l2.700 2.700 2.700-2.700" fill="none" stroke="#666" stroke-width="1.200"/><rect x="836" y="255.200" width="16.800" height="16.800" fill="#dbe6f2" stroke="#8cb6dc" stroke-width="1"/><rect x="858.8" y="255.200" width="16.800" height="16.800" fill="#dbe6f2" stroke="#8cb6dc" stroke-width="1"/><rect x="898.5" y="255.200" width="16.800" height="16.800" fill="#dbe6f2" stroke="#8cb6dc" stroke-width="1"/><rect x="920.2" y="255.200" width="16.800" height="16.800" fill="#dbe6f2" stroke="#8cb6dc" stroke-width="1"/><path d="M840 268.500l.8-2.600 5-5 1.800 1.800-5 5z" fill="#9ab4ac" stroke="#333" stroke-width="0.600"/><path d="M845.300 261l2.200-2.600c1-1 2.800.8 1.800 1.800l-2.600 2.200z" fill="#1c1c1c"/><rect x="862" y="258" width="9" height="11" fill="#f8f8f8" stroke="#334" stroke-width="1"/><rect x="866" y="260" width="3.500" height="4" fill="#d8281c"/><rect x="869" y="261.500" width="3.500" height="4" fill="#f4d020"/><rect x="866.500" y="264.500" width="3.500" height="3.500" fill="#3448c8"/><path d="M902.600 259h8l1.200 1.200v8.500h-9.200z" fill="#2c2c74"/><rect x="904.400" y="259.600" width="5" height="3.400" fill="#e8e8f8"/><rect x="904.800" y="265" width="4.400" height="3.700" fill="#d0d0e8"/><rect x="907.200" y="265.600" width="1.300" height="2.600" fill="#2c2c74"/><path d="M923.700 268.500v-9.300h3.800l1 1.500h4.600v2" fill="#1c2266" stroke="#1c2266" stroke-width="1"/><path d="M924 268.500l2.200-5.300h8l-2.200 5.300z" fill="#dcdcf0" stroke="#1c2266" stroke-width="1"/><rect x="842" y="296.600" width="49.500" height="2" fill="#e8e8e8" stroke="#d6d6d6" stroke-width="0.700"/><path d="M841.200 293.400h6.400v6.200l-3.200 3.200-3.200-3.200z" fill="#f0f0f0" stroke="#9c9c9c" stroke-width="0.900"/><rect x="844.3" y="306.500" width="0.900" height="2.500" fill="#d0d0d0"/><rect x="855.2" y="306.500" width="0.900" height="2.500" fill="#d0d0d0"/><rect x="866.1" y="306.500" width="0.900" height="2.500" fill="#d0d0d0"/><rect x="877" y="306.500" width="0.900" height="2.500" fill="#d0d0d0"/><rect x="888" y="306.500" width="0.900" height="2.500" fill="#d0d0d0"/><rect x="900.500" y="291.500" width="28.300" height="15" fill="#fff" stroke="#7a7a7a" stroke-width="1"/><rect x="901.500" y="292.500" width="26.300" height="13" fill="none" stroke="#d0d0d0" stroke-width="0.800"/><text x="904.300" y="302.700" font-size="9.300" fill="#111" font-family="Liberation Sans, sans-serif">0</text><text x="930.600" y="302.700" font-size="8.500" font-weight="bold" fill="#222" font-family="Liberation Sans, sans-serif">%</text><rect x="836.200" y="316.200" width="77.800" height="17.300" fill="#f2f2f2" stroke="#b2b2b2" stroke-width="1"/><rect x="919.500" y="316.200" width="17.300" height="17.300" fill="#f2f2f2" stroke="#b8b8b8" stroke-width="1"/><g fill="none" stroke="#c0c0c0" stroke-width="0.900"><path d="M923.500 321.500h9.300M926.200 321.500v-1.500h4v1.500M924.500 321.500l.6 8.500h6.200l.6-8.500M927 323.500v5M929.500 323.500v5"/></g><rect x="965" y="103" width="20" height="465" fill="#f0f0f0"/><path d="M965 106.500h14q2.500 0 2.500 2.500v33q0 3-3 3h-13.500" fill="#f2f2f2" stroke="#cfcfcf" stroke-width="1"/><rect x="968.200" y="110.500" width="10" height="10" fill="#6a72c2"/><path d="M964.500 145.500h15.500q3 0 3 3v83q0 3-3 3h-15.500" fill="#f3f3f3" stroke="#d4d4d4" stroke-width="1"/><rect x="964" y="146.300" width="2" height="87.500" fill="#f2f2f2"/><path d="M965.800 568V238.500q0-2.500 2.500-2.500h14.700" fill="none" stroke="#d2d2d2" stroke-width="1"/><rect x="970" y="148" width="8.500" height="11.500" fill="#e8901c" stroke="#3c2a6c" stroke-width="1.200"/><rect x="972" y="150.500" width="4.500" height="6.500" fill="#f8e020"/><g fill="#2c1c5c"><rect x="969" y="147" width="2.500" height="2.500"/><rect x="977" y="147" width="2.500" height="2.500"/><rect x="969" y="158" width="2.500" height="2.500"/><rect x="977" y="158" width="2.500" height="2.500"/></g><path d="M971.300 223l5.400 5.400M976.700 223l-5.400 5.400" stroke="#666" stroke-width="1"/><text transform="translate(970.500,125.300) rotate(90)" font-size="8.700" fill="#777" font-family="Liberation Sans, Noto Sans CJK SC, sans-serif">颜色</text><text transform="translate(971,163.500) rotate(90)" font-size="8.800" fill="#222" font-family="Liberation Sans, Noto Sans CJK SC, sans-serif">位图颜色遮罩</text><rect x="985" y="87" width="15" height="481" fill="#f2f2f2"/><rect x="988.5" y="91" width="1.200" height="1.200" fill="#c4c4c4"/><rect x="991.1" y="91" width="1.200" height="1.200" fill="#c4c4c4"/><rect x="993.7" y="91" width="1.200" height="1.200" fill="#c4c4c4"/><circle cx="992" cy="100.700" r="4.800" fill="#fafafa" stroke="#c8c8c8" stroke-width="0.900"/><path d="M990.700 98.300l3.400 2.400-3.400 2.400z" fill="#111"/><path d="M989.200 116.500l2.800-2.800 2.800 2.800" fill="none" stroke="#8a8a8a" stroke-width="1.300"/><rect x="985.600" y="121.5" width="13" height="12.700" fill="#fff" stroke="#333" stroke-width="0.900"/><path d="M985.600 121.5l13 12.700M998.600 121.5l-13 12.700" stroke="#333" stroke-width="0.900"/><rect x="985.300" y="134.75" width="14" height="13.45" fill="#26221e"/><rect x="985.300" y="148.00" width="14" height="13.45" fill="#363432"/><rect x="985.300" y="161.25" width="14" height="13.45" fill="#4a4846"/><rect x="985.300" y="174.50" width="14" height="13.45" fill="#5c5b5a"/><rect x="985.300" y="187.75" width="14" height="13.45" fill="#6f6e6e"/><rect x="985.300" y="201.00" width="14" height="13.45" fill="#828282"/><rect x="985.300" y="214.25" width="14" height="13.45" fill="#969696"/><rect x="985.300" y="227.50" width="14" height="13.45" fill="#a9a9a9"/><rect x="985.300" y="240.75" width="14" height="13.45" fill="#bebebe"/><rect x="985.300" y="254.00" width="14" height="13.45" fill="#d9d9d9"/><rect x="985.300" y="267.25" width="14" height="13.45" fill="#ffffff"/><rect x="985.300" y="280.50" width="14" height="13.45" fill="#30127e"/><rect x="985.300" y="293.75" width="14" height="13.45" fill="#0a8eea"/><rect x="985.300" y="307.00" width="14" height="13.45" fill="#079a50"/><rect x="985.300" y="320.25" width="14" height="13.45" fill="#fff200"/><rect x="985.300" y="333.50" width="14" height="13.45" fill="#f03a0c"/><rect x="985.300" y="346.75" width="14" height="13.45" fill="#ea2a78"/><rect x="985.300" y="360.00" width="14" height="13.45" fill="#a93a78"/><rect x="985.300" y="373.25" width="14" height="13.45" fill="#f68a00"/><rect x="985.300" y="386.50" width="14" height="13.45" fill="#f49aa2"/><rect x="985.300" y="399.75" width="14" height="13.45" fill="#75655c"/><rect x="985.300" y="413.00" width="14" height="13.45" fill="#baa8d8"/><rect x="985.300" y="426.25" width="14" height="13.45" fill="#8d81b8"/><rect x="985.300" y="426.25" width="14" height="13.25" fill="#fff" stroke="#222" stroke-width="0.900"/><rect x="987.200" y="428.15" width="10.200" height="9.45" fill="#8d81b8" stroke="#444" stroke-width="0.700"/><rect x="985.300" y="439.50" width="14" height="13.45" fill="#5674c0"/><rect x="985.300" y="452.75" width="14" height="13.45" fill="#7056aa"/><rect x="985.300" y="466.00" width="14" height="13.45" fill="#6f5d99"/><rect x="985.300" y="479.25" width="14" height="13.45" fill="#47598f"/><rect x="985.300" y="492.50" width="14" height="13.45" fill="#48476a"/><rect x="985.300" y="505.75" width="14" height="13.45" fill="#57698b"/><rect x="985.300" y="519.00" width="14" height="13.45" fill="#0f6fc4"/><rect x="985.300" y="532.25" width="14" height="13.45" fill="#60b9f2"/><rect x="985.300" y="545.50" width="14" height="13.45" fill="#93a9c0"/><rect x="985.300" y="558.75" width="14" height="13.45" fill="#8096a6"/><rect x="999.300" y="121" width="0.700" height="447" fill="#999"/></svg>
<div class="t" style="left:847px;top:109px;font-size:9.3px;color:#111;font-weight:500;">隐藏颜色</div>
<div class="t" style="left:847px;top:124.7px;font-size:9.3px;color:#111;font-weight:500;">显示颜色</div>
<div class="t" style="left:835px;top:280.2px;font-size:9.3px;color:#111;font-weight:bold;">容限:</div>
<div class="t" style="left:864.8px;top:320.8px;font-size:9.3px;color:#8e8e8e;">应用</div>
<div class="a" style="left:271.1px;top:259.8px;width:3.2px;height:3.2px;background:#fff;border:0.9px solid #1a1a40;box-sizing:border-box;"></div>
<div class="a" style="left:418.7px;top:294.5px;width:3.2px;height:3.2px;background:#fff;border:0.9px solid #1a1a40;box-sizing:border-box;"></div>
<div class="a" style="left:418.7px;top:318.7px;width:3.2px;height:3.2px;background:#fff;border:0.9px solid #1a1a40;box-sizing:border-box;"></div>
</body></html>
